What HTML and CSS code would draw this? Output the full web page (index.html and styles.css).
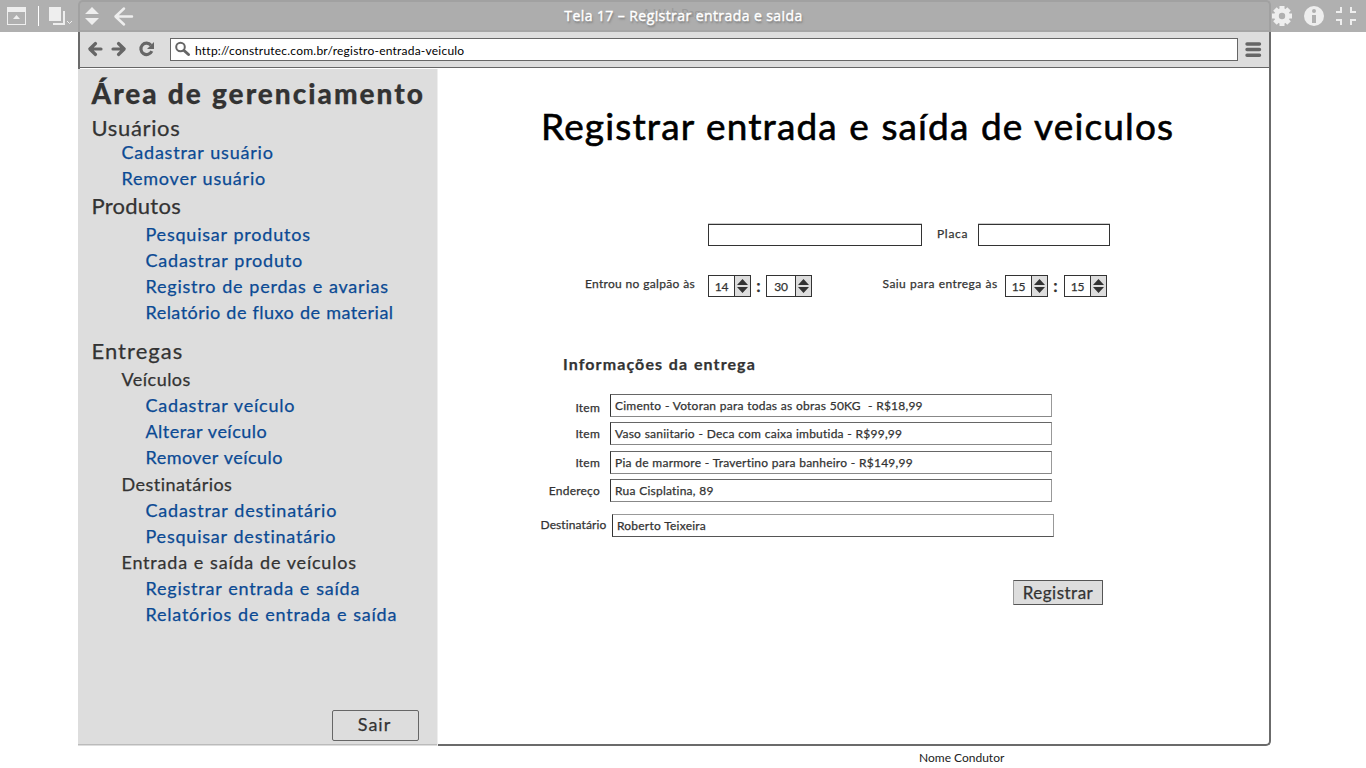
FILE: index.html
```html
<!DOCTYPE html>
<html lang="pt-BR">
<head>
<meta charset="utf-8">
<title>Tela 17 – Registrar entrada e saida</title>
<link rel="stylesheet" href="styles.css">
</head>
<body>
<header class="toolbar">
  <svg class="tools-left" width="140" height="32" viewBox="0 0 140 32">
    <path fill="#eee" fill-rule="evenodd" d="M7 7h19v18H7zM8 12v12h17V12z"/>
    <path fill="#eee" d="M13 19l3.500-4 3.500 4z"/>
    <path fill="#fff" d="M38 6h1v20h-1z"/>
    <path fill="#eee" d="M49 7h12v14H49zM63 11h2v14H53v-2h10z"/>
    <path fill="none" stroke="#eee" d="M67 21l2.500 2.500L72 21"/>
    <path fill="#eee" d="M85 14l7-7 7 7zM85 18l7 7 7-7z"/>
    <path fill="none" stroke="#eee" stroke-width="2.500" stroke-linecap="round" stroke-linejoin="round" d="M132 16.500h-16M124 8.500l-8.500 8 8.500 8"/>
  </svg>
  <div class="title-band">
    <span class="ghost">A Web Page</span>
    <span class="screen-name">Tela 17 – Registrar entrada e saida</span>
  </div>
  <svg class="tools-right" width="96" height="32" viewBox="1270 0 96 32">
    <g fill="#eee">
      <circle cx="1282" cy="16" r="7.800"/>
      <path d="M1279.500 6h5v20h-5zM1272 13.500h20v5h-20z"/>
      <path transform="rotate(45 1282 16)" d="M1279.500 6h5v20h-5zM1272 13.500h20v5h-20z"/>
    </g>
    <circle cx="1282" cy="16" r="3.200" fill="#b0b0b0"/>
    <circle cx="1314" cy="16" r="10" fill="#eee"/>
    <circle cx="1314" cy="11" r="2" fill="#b0b0b0"/>
    <path fill="#b0b0b0" d="M1312 15h4v8h-4z"/>
    <path fill="none" stroke="#eee" stroke-width="2" d="M1336 12h5V7M1356 12h-5V7M1336 20h5v5M1356 20h-5v5"/>
  </svg>
</header>

<div class="browser">
  <nav class="address-bar">
    <svg width="82" height="35" viewBox="80 32 82 35" fill="none" stroke="#666" stroke-width="3.200" stroke-linecap="round" stroke-linejoin="round">
      <path d="M101 49H90M95.500 43.500L89.800 49l5.700 5.500M113 49h11M118.500 43.500l5.700 5.500-5.700 5.500"/>
      <path stroke-linecap="butt" d="M151 45.200a5.700 5.700 0 1 0 .8 6"/>
      <path fill="#666" stroke="none" d="M154 42v7h-7z"/>
    </svg>
    <div class="url">
      <svg width="19" height="19" viewBox="0 0 19 19" fill="none" stroke="#666">
        <circle cx="5.500" cy="7" r="4.300" stroke-width="2"/>
        <path d="M9 10.500l4.500 4" stroke-width="3" stroke-linecap="round"/>
      </svg>
      <span>http://construtec.com.br/registro-entrada-veiculo</span>
    </div>
    <svg width="17" height="35" viewBox="0 0 17 35" stroke="#666" stroke-width="3.400" stroke-linecap="round">
      <path d="M2 12h12.500M2 17.500h12.500M2 23.200h12.500"/>
    </svg>
  </nav>

  <div class="page">
    <aside class="sidebar">
      <h2 class="area">Área de gerenciamento</h2>
      <h3 class="section">Usuários</h3>
      <ul class="links near">
        <li><a>Cadastrar usuário</a></li>
        <li><a>Remover usuário</a></li>
      </ul>
      <h3 class="section products">Produtos</h3>
      <ul class="links">
        <li><a>Pesquisar produtos</a></li>
        <li><a>Cadastrar produto</a></li>
        <li><a>Registro de perdas e avarias</a></li>
        <li class="tight"><a>Relatório de fluxo de material</a></li>
      </ul>
      <h3 class="section deliveries">Entregas</h3>
      <h4 class="group first tight">Veículos</h4>
      <ul class="links">
        <li><a>Cadastrar veículo</a></li>
        <li class="tight"><a>Alterar veículo</a></li>
        <li class="tight"><a>Remover veículo</a></li>
      </ul>
      <h4 class="group recipients tight">Destinatários</h4>
      <ul class="links">
        <li><a>Cadastrar destinatário</a></li>
        <li><a>Pesquisar destinatário</a></li>
      </ul>
      <h4 class="group">Entrada e saída de veículos</h4>
      <ul class="links">
        <li><a>Registrar entrada e saída</a></li>
        <li><a>Relatórios de entrada e saída</a></li>
      </ul>
      <button class="exit">Sair</button>
    </aside>

    <main class="content">
      <h1 class="heading">Registrar entrada e saída de veiculos</h1>

      <div class="row vehicle">
        <div class="box driver"></div>
        <label class="plate-label">Placa</label>
        <div class="box plate"></div>
      </div>

      <div class="row times">
        <label class="time-label entry">Entrou no galpão às</label>
        <div class="spinner"><span>14</span><i><svg width="11" height="14" viewBox="0 0 11 14"><path d="M5.500 0L11 6H0zM0 8h11l-5.500 6z"/></svg></i></div>
        <b class="colon">:</b>
        <div class="spinner wide"><span>30</span><i><svg width="11" height="14" viewBox="0 0 11 14"><path d="M5.500 0L11 6H0zM0 8h11l-5.500 6z"/></svg></i></div>
        <label class="time-label leave">Saiu para entrega às</label>
        <div class="spinner"><span>15</span><i><svg width="11" height="14" viewBox="0 0 11 14"><path d="M5.500 0L11 6H0zM0 8h11l-5.500 6z"/></svg></i></div>
        <b class="colon">:</b>
        <div class="spinner last"><span>15</span><i><svg width="11" height="14" viewBox="0 0 11 14"><path d="M5.500 0L11 6H0zM0 8h11l-5.500 6z"/></svg></i></div>
      </div>

      <h2 class="subheading">Informações da entrega</h2>

      <div class="fields">
        <label class="low">Item</label><div class="field">Cimento - Votoran para todas as obras 50KG&nbsp; - R$18,99</div>
        <label>Item</label><div class="field">Vaso saniitario - Deca com caixa imbutida - R$99,99</div>
        <label>Item</label><div class="field">Pia de marmore - Travertino para banheiro - R$149,99</div>
        <label>Endereço</label><div class="field">Rua Cisplatina, 89</div>
      </div>
      <div class="row recipient">
        <label>Destinatário</label><div class="field dark">Roberto Teixeira</div>
      </div>

      <button class="submit">Registrar</button>
    </main>
  </div>
</div>
<p class="driver-name">Nome Condutor</p>
</body>
</html>
```
FILE: styles.css
```css
* { box-sizing: border-box; }
body {
  margin: 0;
  height: 768px;
  overflow: hidden;
  background: #fff;
  color: #333;
  font: 12px/16px Lato, "Noto Sans", sans-serif;
  letter-spacing: .22px;
  word-spacing: .3px;
  -webkit-text-stroke: .25px currentColor;
}
h1, h2, h3, h4, ul, p { margin: 0; padding: 0; font-weight: 400; }
ul { list-style: none; }
svg { display: block; flex: none; }

.toolbar { position: relative; display: flex; height: 32px; background: #b0b0b0; }
.tools-left { position: absolute; left: 0; top: 0; }
.tools-right { margin-left: -1px; }
.title-band {
  width: 1193px;
  margin-left: 78px;
  border: 2px solid #a1a1a1;
  border-bottom: 0;
  border-radius: 5px 5px 0 0;
  background: #adadad;
  box-shadow: inset 0 -2px #a5a5a5;
  display: grid;
  justify-items: center;
}
.title-band span { grid-area: 1 / 1; line-height: 29px; }
.title-band .ghost {
  color: #999;
  font-size: 12px;
  line-height: 22px;
  letter-spacing: 0;
  -webkit-text-stroke: 0;
}
.screen-name {
  position: relative;
  left: 9px;
  top: -1px;
  color: #fff;
  font: 14px/29px "Open Sans", sans-serif;
  letter-spacing: .42px;
  word-spacing: 0;
  -webkit-text-stroke: .4px #fff;
  text-shadow: 1px 2px 2px #777;
}

.browser {
  width: 1193px;
  height: 714px;
  margin-left: 78px;
  border: 2px solid #6b6b6b;
  border-top: 0;
  border-radius: 0 0 5px 5px;
}
.address-bar {
  height: 36px;
  display: flex;
  background: #ddd;
  border-bottom: 1px solid #666;
}
.url {
  display: flex;
  width: 1068px;
  height: 23px;
  margin: 6px 7px 0 8px;
  padding: 1px 0 0 4px;
  border: 1px solid #666;
  background: #fff;
  color: #000;
  letter-spacing: .22px;
  -webkit-text-stroke: 0;
}
.url span { margin-left: 1px; line-height: 21px; }

.page { display: flex; height: 678px; }
.sidebar {
  display: flex;
  flex-direction: column;
  flex: none;
  width: 360px;
  height: 677px;
  margin: 1px 0 0 -2px;
  padding-left: 13.500px;
  background: #ddd;
  border-right: 1px solid #eee;
  box-shadow: inset 0 -1px #ddd, inset 0 -2px #bbb;
}
.area {
  height: 45px;
  font-size: 28px;
  line-height: 49px;
  font-weight: 900;
  letter-spacing: 2px;
  word-spacing: .5px;
}
.section { height: 26px; font-size: 22px; line-height: 27px; letter-spacing: .65px; }
.products { margin-top: 1px; letter-spacing: .25px; }
.deliveries { margin-top: 12px; letter-spacing: 1.050px; }
.links, .group { font-size: 18px; line-height: 27px; letter-spacing: .78px; word-spacing: .6px; }
.links .tight, .group.tight { letter-spacing: .47px; }
.links { padding-left: 54px; color: #0b4a94; }
.links li, .group { height: 26px; }
.links.near { padding-left: 30px; margin-top: -1px; }
.products + .links { margin-top: 3px; }
.group { padding-left: 30px; }
.group.first { margin-top: 3px; }
.group.recipients { margin-top: 1px; }
button {
  padding: 0;
  color: #333;
  background: #ddd;
  font-family: inherit;
  -webkit-text-stroke: .25px currentColor;
}
.exit {
  width: 87px;
  height: 31px;
  margin: 83px 0 0 240.500px;
  padding: 0 2px 3px 0;
  border: 1px solid #666;
  border-radius: 2px;
  font-size: 18px;
  letter-spacing: 1px;
}

.content { flex: 1; }
.heading {
  margin: 34px 0 0 103px;
  color: #000;
  font-size: 37px;
  line-height: 48px;
  letter-spacing: 1.150px;
  word-spacing: .8px;
  -webkit-text-stroke: .6px #000;
}
.row { display: flex; white-space: nowrap; }
.vehicle { margin: 74px 0 0 270px; line-height: 20px; }
.box { height: 22px; border: 1px solid #333; box-shadow: 0 -1px #ccc; }
.driver { width: 214px; }
.plate-label { width: 56px; padding-left: 15px; letter-spacing: .7px; }
.plate { width: 132px; }
.times { margin: 29px 0 0 147px; line-height: 18px; }
.time-label.entry { width: 123px; letter-spacing: .28px; }
.time-label.leave { width: 193px; padding-left: 70.500px; letter-spacing: .45px; }
.spinner {
  display: flex;
  width: 43px;
  height: 22px;
  border: 1px solid #333;
  line-height: 21px;
}
.spinner.wide { width: 46px; }
.spinner.last { margin-left: 1px; }
.spinner span { flex: 1; text-align: center; letter-spacing: -.3px; }
.spinner i {
  width: 16px;
  background: #ddd;
  border-left: 1px solid #333;
  display: grid;
  place-items: center;
}
.spinner path { fill: #333; }
.colon { width: 15px; font-size: 17px; line-height: 22px; text-align: center; }

.subheading {
  margin: 55px 0 0 125px;
  font-size: 16px;
  line-height: 24px;
  font-weight: 700;
  letter-spacing: 1.100px;
  word-spacing: .7px;
}
.fields {
  display: grid;
  grid-template-columns: 162px 442px;
  grid-auto-rows: 23px;
  column-gap: 10px;
  row-gap: 5.400px;
  margin-top: 18px;
  text-align: right;
  line-height: 23px;
}
.low { padding-top: 2px; }
.field {
  width: 442px;
  height: 23px;
  padding-left: 4px;
  line-height: 21px;
  border: 1px solid #666;
  border-left-color: #333;
  border-right-color: #999;
  border-bottom-color: #888;
  text-align: left;
}
.field.dark { border-top-color: #999; border-bottom-color: #555; }
.recipient { margin: 12px 0 0 102.500px; line-height: 22px; }
.recipient label { width: 71.500px; letter-spacing: .1px; }
.submit {
  display: block;
  width: 90px;
  height: 25px;
  margin: 43px 0 0 575px;
  border: 1px solid #555;
  border-left-color: #999;
  border-radius: 1px;
  font-size: 17px;
  line-height: 21px;
  letter-spacing: .5px;
}
.driver-name {
  margin: 4px 0 0 919px;
  color: #222;
  letter-spacing: 0;
  word-spacing: 0;
  -webkit-text-stroke: 0;
}
```
